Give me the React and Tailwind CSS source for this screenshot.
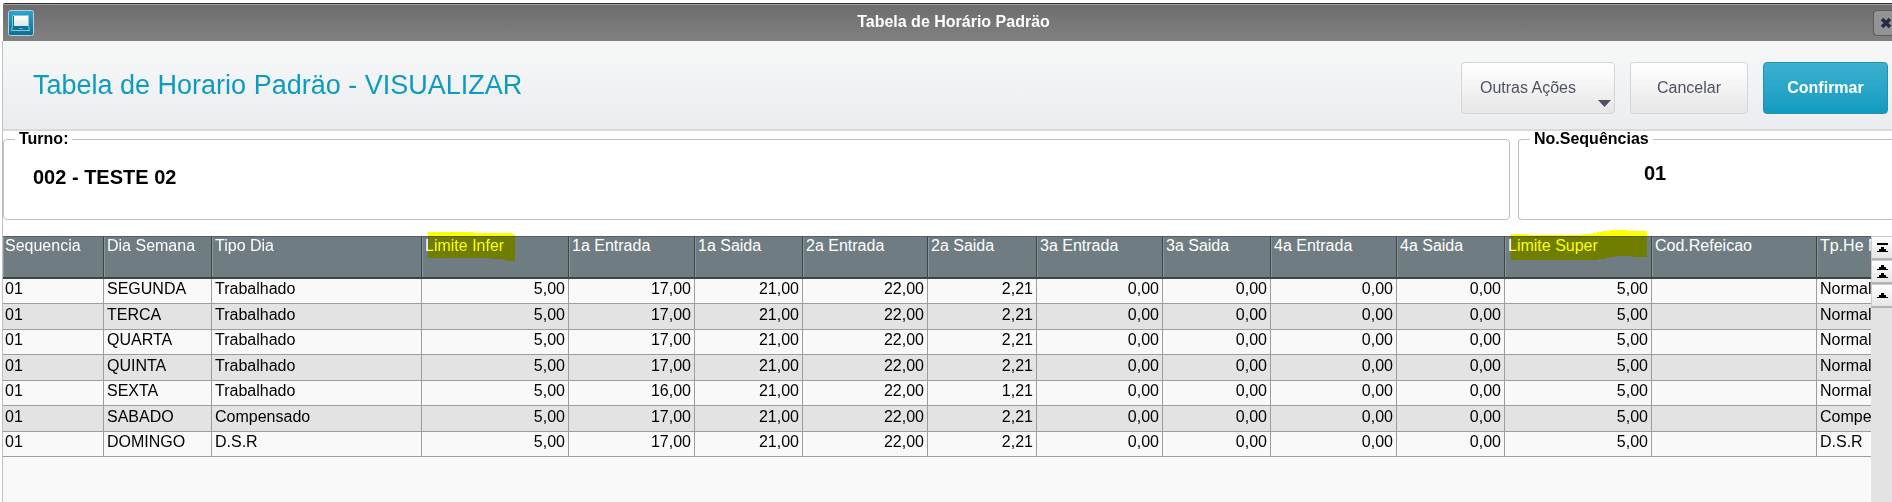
import React from 'react';

const COLUMNS = [
    { key: 'sequencia', label: 'Sequencia', width: 'w-[101px]' },
    { key: 'dia', label: 'Dia Semana', width: 'w-[108px]' },
    { key: 'tipo', label: 'Tipo Dia', width: 'w-[210px]' },
    { key: 'limiteInfer', label: 'Limite Infer', width: 'w-[147px]', numeric: true, mark: 'infer' },
    { key: 'entrada1', label: '1a Entrada', width: 'w-[126px]', numeric: true },
    { key: 'saida1', label: '1a Saida', width: 'w-[108px]', numeric: true },
    { key: 'entrada2', label: '2a Entrada', width: 'w-[125px]', numeric: true },
    { key: 'saida2', label: '2a Saida', width: 'w-[109px]', numeric: true },
    { key: 'entrada3', label: '3a Entrada', width: 'w-[126px]', numeric: true },
    { key: 'saida3', label: '3a Saida', width: 'w-[108px]', numeric: true },
    { key: 'entrada4', label: '4a Entrada', width: 'w-[126px]', numeric: true },
    { key: 'saida4', label: '4a Saida', width: 'w-[108px]', numeric: true },
    { key: 'limiteSuper', label: 'Limite Super', width: 'w-[147px]', numeric: true, mark: 'super' },
    { key: 'refeicao', label: 'Cod.Refeicao', width: 'w-[165px]' },
    { key: 'tpHe', label: 'Tp.He Normal', width: 'w-[130px]' },
];

const BASE = {
    sequencia: '01', limiteInfer: '5,00', entrada1: '17,00', saida1: '21,00', entrada2: '22,00', saida2: '2,21',
    entrada3: '0,00', saida3: '0,00', entrada4: '0,00', saida4: '0,00', limiteSuper: '5,00', refeicao: '',
};

const ROWS = [
    { ...BASE, dia: 'SEGUNDA', tipo: 'Trabalhado', tpHe: 'Normal' },
    { ...BASE, dia: 'TERCA', tipo: 'Trabalhado', tpHe: 'Normal' },
    { ...BASE, dia: 'QUARTA', tipo: 'Trabalhado', tpHe: 'Normal' },
    { ...BASE, dia: 'QUINTA', tipo: 'Trabalhado', tpHe: 'Normal' },
    { ...BASE, dia: 'SEXTA', tipo: 'Trabalhado', tpHe: 'Normal', entrada1: '16,00', saida2: '1,21' },
    { ...BASE, dia: 'SABADO', tipo: 'Compensado', tpHe: 'Compensado' },
    { ...BASE, dia: 'DOMINGO', tipo: 'D.S.R', tpHe: 'D.S.R' },
];

// Marca-texto amarelo sobre o cabeçalho da coluna
const Marca = ({ tipo }) => (
    tipo === 'infer' ? (
        <svg className="absolute left-1.5 -top-[5px] mix-blend-multiply" width="88" height="30" viewBox="0 0 88 30">
            <path d="M0 0H45V1H84V2H87V29H78V28H75V27H63V26H0Z" fill="#ffff00" />
        </svg>
    ) : (
        <svg className="absolute left-1.5 -top-[7px] mix-blend-multiply" width="138" height="31" viewBox="0 0 138 31">
            <path d="M0 4H17V5H71V4H82V3H86V2H91V1H99V0H117V1H136V27H121V26H104V27H98V28H95V29H87V30H0Z" fill="#ffff00" />
        </svg>
    )
);

const IconeJanela = () => (
    <svg width="26" height="26" viewBox="0 0 26 26">
        <defs>
            <linearGradient id="janela" x1="0" y1="0" x2="0" y2="1">
                <stop offset="0" stopColor="#2ba6cc" />
                <stop offset="1" stopColor="#0b6f99" />
            </linearGradient>
            <linearGradient id="tela" x1="0" y1="0" x2="0" y2="1">
                <stop offset="0" stopColor="#ffffff" />
                <stop offset="1" stopColor="#dfe6e9" />
            </linearGradient>
        </defs>
        <rect x="0.5" y="0.5" width="25" height="25" rx="2" fill="url(#janela)" stroke="#b9cfd6" />
        <path d="M4.500 5.500h16v11l1 4h-18l1-4z" fill="#0d7298" stroke="#8ec5d8" />
        <rect x="6" y="6" width="14" height="10" fill="url(#tela)" />
        <path d="M11 18.500h4" stroke="#5fb0cb" />
    </svg>
);

const BotaoRolagem = ({ label, children }) => (
    <button aria-label={label} className="h-6 w-full pl-1 flex items-center bg-linear-to-b from-white to-[#e6e6e6] border-l border-t border-[#cccccc] border-b-2 border-b-[#b3b3b3]">
        <svg className="shrink-0" width="13" height="16" viewBox="0 0 13 16" fill="#000">{children}</svg>
    </button>
);

export default function App() {
    return (
        <div className="pt-[3px] pl-[3px] min-h-screen bg-white overflow-hidden flex flex-col font-['Liberation_Sans',Arial,sans-serif] text-base leading-5 text-black">

            {/* --- BARRA DE TÍTULO --- */}
            <div className="h-[38px] shrink-0 flex items-center justify-between pl-[5px] border-t border-[#333333] rounded-tl-xs bg-linear-to-b from-[#6d6d6d] to-[#818181] shadow-[inset_0_1px_0_#a0a0a0]">
                <IconeJanela />
                <h1 className="pb-0.5 text-white font-bold">Tabela de Horário Padräo</h1>
                <button aria-label="Fechar" className="w-[19px] h-[26px] flex items-center justify-end rounded-l border border-r-0 border-[#5a5a5a] bg-[#939393]">
                    <svg width="12" height="12" viewBox="0 0 12 12"><path d="M2 2l8 8M10 2l-8 8" stroke="#262b44" strokeWidth="3.6" /></svg>
                </button>
            </div>

            <div className="flex-1 flex flex-col border-l border-[#c0c0c0] -ml-px">
                {/* --- CABEÇALHO COM AÇÕES --- */}
                <header className="h-[90px] flex items-center justify-between pl-[30px] pr-1 border-b-2 border-[#d9d9d9] bg-linear-to-b from-[#f6f8f8] to-[#ebecef]">
                    <h2 className="text-[27px] leading-8 text-[#0f9ac0]">Tabela de Horario Padräo - VISUALIZAR</h2>
                    <div className="flex gap-[15px] pt-1.5 text-[#4e5261]">
                        <button className="relative w-[154px] h-[52px] pr-5 rounded border border-[#d5d5d5] bg-linear-to-b from-white to-[#e6e6e6]">
                            Outras Ações
                            <svg className="absolute right-[3px] bottom-1.5" width="13" height="7" viewBox="0 0 13 7"><path d="M0 0h13L6.500 7z" fill="#4e5261" /></svg>
                        </button>
                        <button className="w-[118px] h-[52px] rounded border border-[#d5d5d5] bg-linear-to-b from-white to-[#e6e6e6]">Cancelar</button>
                        <button className="w-[125px] h-[52px] rounded border border-[#1f93b3] bg-linear-to-b from-[#3bafcf] to-[#109cc0] text-white font-bold">Confirmar</button>
                    </div>
                </header>

                {/* --- TURNO E SEQUÊNCIAS --- */}
                <div className="flex gap-2 bg-white pb-4">
                    <fieldset className="flex-1 h-[89px] border border-[#c0c0c0] rounded pl-[29px]">
                        <legend className="-ml-[18px] px-1 font-bold leading-4">Turno:</legend>
                        <p className="pt-[18px] font-bold text-xl leading-6">002 - TESTE 02</p>
                    </fieldset>
                    <fieldset className="w-[374px] h-[89px] border border-r-0 border-[#c0c0c0] rounded-l pl-[29px]">
                        <legend className="-ml-[18px] px-1 font-bold leading-4">No.Sequências</legend>
                        <p className="pt-3.5 pl-24 font-bold text-xl leading-6">01</p>
                    </fieldset>
                </div>

                {/* --- TABELA --- */}
                <div className="flex-1 flex bg-[#f9f9f9]">
                    <div className="flex-1 min-w-0 overflow-x-clip">
                        <table className="table-fixed w-[1944px] border-separate border-spacing-0">
                            <thead>
                                <tr className="h-[43px]">
                                    {COLUMNS.map((col) => (
                                        <th key={col.key} className={`${col.width} relative p-0 pl-[3px] first:pl-0.5 align-top text-left font-normal leading-[18px] text-white whitespace-nowrap bg-[#6f7d82] border-t border-t-[#555e61] border-b-2 border-b-[#3c4447] border-r border-r-[#3c4447] shadow-[inset_1px_0_0_#8c979b]`}>
                                            {col.label}
                                            {col.mark && <Marca tipo={col.mark} />}
                                        </th>
                                    ))}
                                </tr>
                            </thead>
                            <tbody>
                                {ROWS.map((row) => (
                                    <tr key={row.dia} className="h-[25px] even:h-[26px] even:bg-[#e3e3e3]">
                                        {COLUMNS.map((col) => (
                                            <td key={col.key} className={`p-0 px-[3px] first:pl-0.5 pb-1 whitespace-nowrap border-b border-r border-[#9d9d9d] ${col.numeric ? 'text-right' : ''}`}>
                                                {row[col.key]}
                                            </td>
                                        ))}
                                    </tr>
                                ))}
                            </tbody>
                        </table>
                    </div>
                    <div className="w-[21px] bg-[#e3e3e3]">
                        <BotaoRolagem label="Primeira linha"><path d="M1 3h11v2H1zM5 7h3v2h2v2h2v1H1v-1h2V9h2z" /></BotaoRolagem>
                        <BotaoRolagem label="Página acima"><path d="M5 1h3v2h2v2h2v1H1V5h2V3h2zM5 9h3v2h2v2h2v1H1v-1h2v-2h2z" /></BotaoRolagem>
                        <BotaoRolagem label="Linha acima"><path d="M5 5h3v2h2v2h2v1H1V9h2V7h2z" /></BotaoRolagem>
                    </div>
                </div>
            </div>
        </div>
    );
}
